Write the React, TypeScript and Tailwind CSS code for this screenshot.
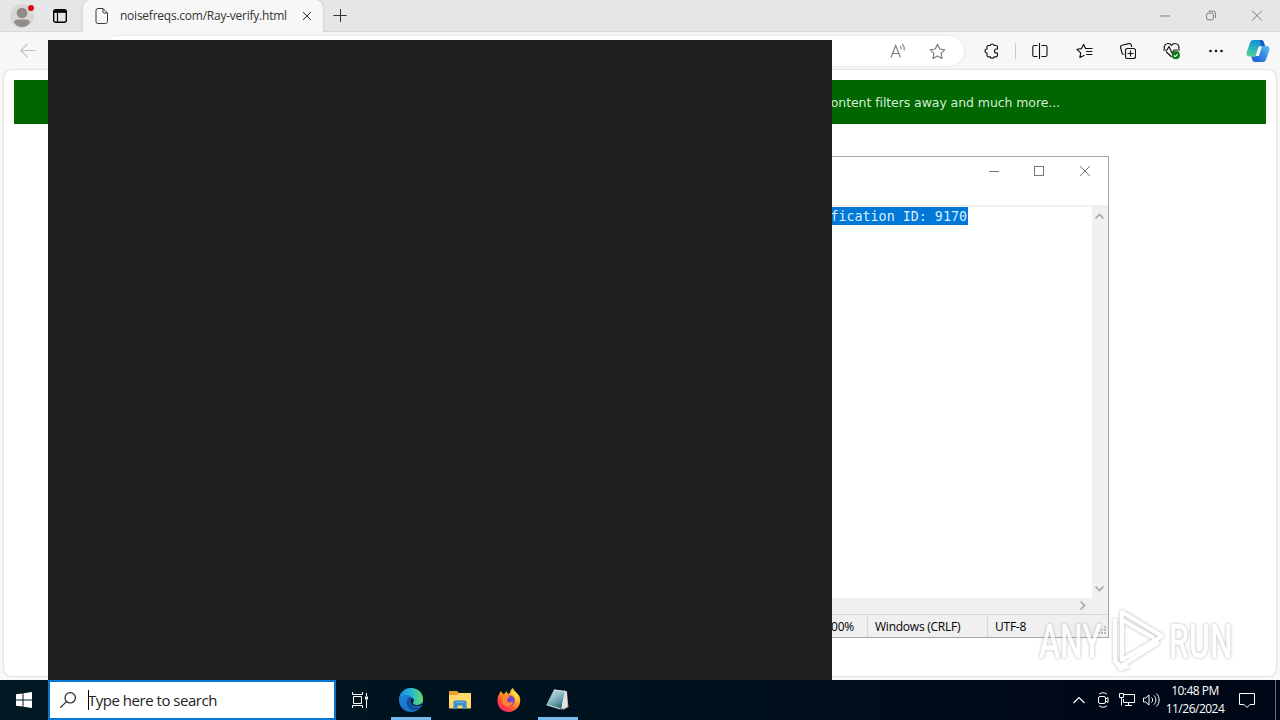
import React from "react";

type IconProps = { className?: string };

function Profile() {
  return (
    <div className="relative ml-[10px] h-6 w-6 rounded-full bg-[#d9d7d6]">
      <svg className="h-6 w-6" viewBox="0 0 24 24">
        <circle cx="12" cy="9" r="5.3" fill="#8f8c8a" />
        <path d="M4 18.500c0-2 2-3 4-3h8c2 0 4 1 4 3-2 3-5 4.500-8 4.500s-6-1.500-8-4.500z" fill="#8f8c8a" />
      </svg>
      <span className="absolute top-px left-[18px] h-[6px] w-[6px] rounded-full bg-[#d90a15]" />
    </div>
  );
}

function TabMenuIcon({ className }: IconProps) {
  return (
    <svg className={className} viewBox="0 0 16 16" fill="none" stroke="#000">
      <rect x="1.700" y="1.700" width="12.600" height="12.600" rx="2" strokeWidth="1.400" />
      <path d="M2 3.500h12" strokeWidth="2.600" />
      <path d="M5.500 4v10" strokeWidth="1.200" />
    </svg>
  );
}

function TitleBar() {
  return (
    <div className="flex h-8 shrink-0 items-stretch border-b border-[#d8d8d8] bg-[#e6e6e6]">
      <div className="flex w-[83px] items-center">
        <Profile />
        <TabMenuIcon className="ml-[18px] h-4 w-4" />
      </div>
      <div className="-mb-px flex w-[240px] items-center rounded-t-lg bg-[#f7f7f7] shadow-[0_0_3px_#bdbdbd] [clip-path:inset(0_-3px_0_-3px)]">
        <svg className="ml-[12px] h-4 w-[14px] shrink-0" viewBox="0 0 14 16" fill="none" stroke="#3b3b3b">
          <path d="M3 .5h5l4.500 4.500v8.500a2 2 0 0 1-2 2H3a2 2 0 0 1-2-2v-11a2 2 0 0 1 2-2zM8 .5V4a1 1 0 0 0 1 1h3.500" />
        </svg>
        <span className="ml-[11px] w-[182px] text-[12px] tracking-[-0.240px] whitespace-nowrap text-[#333]">
          noisefreqs.com/Ray-verify.html
        </span>
        <svg className="mr-[11px] h-[10px] w-[10px] shrink-0" viewBox="0 0 10 10" stroke="#333">
          <path d="M1 1l8 8M9 1l-8 8" />
        </svg>
      </div>
      <svg className="mt-[9px] ml-[10px] h-[14px] w-[14px]" viewBox="0 0 14 14" stroke="#333">
        <path d="M.5 6.500h13M7.500 0v13" />
      </svg>
      <div className="ml-auto flex">
        <svg className="w-[46px]" viewBox="0 0 46 32" fill="none" stroke="#777">
          <path d="M18 16.500h10" />
        </svg>
        <svg className="w-[46px]" viewBox="0 0 46 32" fill="none" stroke="#777">
          <rect x="18.500" y="13.500" width="7" height="7" rx="1.500" />
          <path d="M20.500 11.500h5a2 2 0 0 1 2 2v5" />
        </svg>
        <svg className="w-[46px]" viewBox="0 0 46 32" fill="none" stroke="#777">
          <path d="M18 11l10 10M28 11l-10 10" />
        </svg>
      </div>
    </div>
  );
}

const STAR = "M8 1.200l2.100 4.400 4.800.7-3.500 3.400.9 4.800L8 12.200l-4.300 2.300.9-4.800L1.100 6.300l4.800-.7z";

function ToolbarIcons() {
  return (
    <div className="mt-[11px] flex h-4 items-center">
      <svg className="ml-[20px] h-4 w-4" viewBox="0 0 16 16" fill="none" stroke="#111" strokeWidth="1.150">
        <path d="M4.500 2.500H6.200a2.100 2.100 0 0 1 4 0H12a1.500 1.500 0 0 1 1.500 1.500V6h-1a2 2 0 0 0 0 4h1v2.300a1.500 1.500 0 0 1-1.500 1.500h-1.800a2.100 2.100 0 0 1-4 0H4.500A1.500 1.500 0 0 1 3 12.300V10a2 2 0 0 1 0-4V4a1.500 1.500 0 0 1 1.500-1.500z" strokeLinejoin="round" />
      </svg>
      <span className="ml-[15px] h-4 w-px bg-[#ccc]" />
      <svg className="ml-[16px] h-4 w-4" viewBox="0 0 16 16" fill="none" stroke="#111" strokeWidth="1.100">
        <path d="M5.500 2.500H2.500A1.500 1.500 0 0 0 .8 4v8A1.500 1.500 0 0 0 2.500 13.500h3M9.500 2.500h4A1.500 1.500 0 0 1 15 4v8a1.500 1.500 0 0 1-1.500 1.500h-4M7.500 0v16" />
      </svg>
      <svg className="ml-[28px] h-4 w-[17px]" viewBox="0 0 17 16" fill="none" stroke="#111" strokeWidth="1.150" strokeLinejoin="round" strokeLinecap="round">
        <path d="M8 12.500L3.900 14.600l.8-4.800L1 6.300l4.500-.7L7.600 1.500l2 4h6.500M10.500 8.500h5.500M10.500 11.500h5.500" />
      </svg>
      <svg className="ml-[27px] h-4 w-4" viewBox="0 0 16 16" fill="none" stroke="#111" strokeWidth="1.150">
        <rect x="5.500" y="5.500" width="10" height="10" rx="2" />
        <path d="M10.500 7.500v6M7.500 10.500h6M4 11.500l-.8-.2a2 2 0 0 1-1.300-1.800L.6 4.500A2 2 0 0 1 2 2.200L8.800.6A2 2 0 0 1 11.300 2l.4 2" />
      </svg>
      <svg className="ml-[27px] h-[18px] w-[18px]" viewBox="0 0 18 18" fill="none" stroke="#111" strokeWidth="1.100" strokeLinejoin="round">
        <path d="M1.500 7C.5 3.500 3 1.500 5 1.500c2 0 3 1 3.500 2 .5-1 1.800-2 3.500-2 2.500 0 4.500 2 3.800 5.500M3 9.500l5.500 5.500M0 8h4l2-3.500 3 6.500 2-3h6" />
        <circle cx="12.800" cy="13.200" r="4.100" fill="#107c10" stroke="none" />
        <path d="M11 13.500l1.300 1.200 2.400-2.700" stroke="#fff" />
      </svg>
      <svg className="ml-[27px] h-4 w-4" viewBox="0 0 16 16" fill="#111">
        <circle cx="2.500" cy="8" r="1.300" /><circle cx="8" cy="8" r="1.300" /><circle cx="13.500" cy="8" r="1.300" />
      </svg>
      <svg className="ml-[22px] h-6 w-6 shrink-0" viewBox="0 0 24 24">
        <defs>
          <linearGradient id="cpA" x1="0.600" y1="0" x2="0.200" y2="1"><stop offset="0" stopColor="#138fd8" /><stop offset=".6" stopColor="#2eb8b8" /><stop offset="1" stopColor="#4fd58a" /></linearGradient>
          <linearGradient id="cpB" x1="1" y1="0" x2="0" y2="1"><stop offset="0" stopColor="#58b8f5" /><stop offset="1" stopColor="#1556d8" /></linearGradient>
        </defs>
        <path d="M7 1h8c2 0 2.500 1.500 3 3l1 3h-3c-2 0-3 1-3.500 3l-1.500 5c-.5 2-1.500 2.500-3 2.500H3.500C1 17.500 0 15.500.8 13L4 3.500C4.500 2 5.500 1 7 1z" fill="url(#cpA)" />
        <path d="M14 1h1c2 0 2.500 1.500 3 3l1 3h-4z" fill="#1659ce" />
        <path d="M17 23H9c-2 0-2.500-1.500-3-3l-.8-2.500H8c2 0 3-1 3.500-3L13 9.500C13.500 7.500 14.500 7 16 7h4.500c2.500 0 3.500 2 2.700 4.500L20 20.500c-.5 1.500-1.500 2.500-3 2.500z" fill="url(#cpB)" />
        <path d="M12.500 7.500h3.500l-3 9.500H9.500z" fill="#f7f7f7" />
      </svg>
    </div>
  );
}

function Toolbar() {
  return (
    <div className="flex h-[38px] shrink-0 items-start bg-[#f7f7f7]">
      <svg className="mt-[11px] ml-[20px] h-4 w-4" viewBox="0 0 16 16" fill="none" stroke="#c4c4c4" strokeWidth="1.100">
        <path d="M16 7.500H.8M7.500 1L.8 7.500l6.700 6.500" />
      </svg>
      <div className="mt-[4px] ml-[68px] flex h-[30px] w-[860px] items-center rounded-full bg-white shadow-[0_0_3px_#ddd]">
        <svg className="ml-auto h-[17px] w-[17px]" viewBox="0 0 17 17" fill="none" stroke="#777" strokeWidth="1.100">
          <path d="M2 14.500L6.700 2.500 11.500 14.500M3.600 10.500h6.300M11.200 3.200c.8.800 1.100 2 .9 3.200M13.200 1.200c1.800 1.600 2.400 4 1.800 6.200" />
        </svg>
        <svg className="mr-[18px] ml-[23px] h-[17px] w-[17px]" viewBox="0 0 16 16" fill="none" stroke="#777" strokeWidth="1.050" strokeLinejoin="round">
          <path d={STAR} />
        </svg>
      </div>
      <ToolbarIcons />
    </div>
  );
}

function Browser() {
  return (
    <div className="flex h-[680px] flex-col bg-[#f7f7f7]">
      <TitleBar />
      <Toolbar />
      <main className="mx-1 mb-[4px] flex-1 rounded-lg bg-white px-[10px] pt-[10px] shadow-[0_0_2px_#b5b5b5]">
        <div className="flex h-11 items-center justify-end bg-[#006600] pt-[2px] pr-[206px] font-['DejaVu_Sans'] text-[12.500px] tracking-[-0.080px] whitespace-nowrap text-[#d5ecd5]">
          You can use all features, turn content filters away and much more...
        </div>
      </main>
    </div>
  );
}

function Notepad() {
  return (
    <section className="absolute top-[156px] left-[500px] flex h-[482px] w-[609px] flex-col border border-[#a5a5a5] bg-white">
      <div className="flex h-[29px] justify-end">
        <svg className="w-[46px]" viewBox="0 0 46 29" fill="none" stroke="#777"><path d="M18 14.500h10" /></svg>
        <svg className="w-[45px]" viewBox="0 0 45 29" fill="none" stroke="#777"><rect x="17.500" y="9.500" width="9" height="9" /></svg>
        <svg className="w-[46px]" viewBox="0 0 46 29" fill="none" stroke="#777"><path d="M18 9l10 10M28 9L18 19" /></svg>
      </div>
      <div className="h-[19px]" />
      <div className="flex min-h-0 flex-1 border-t-2 border-[#f0f0f0]">
        <div className="flex flex-1 justify-end pr-[124px] font-['DejaVu_Sans_Mono'] text-[13.350px] leading-[19px] whitespace-pre">
          <span className="h-[18px] bg-[#0078d7] pr-px text-[#d9efff]">Verification ID: 9170</span>
        </div>
        <div className="flex w-4 flex-col justify-between bg-[#f0f0f0]">
          <svg className="h-[17px]" viewBox="0 0 16 17" fill="none" stroke="#aaa" strokeWidth="1.700"><path d="M3.500 11.500L7.500 7.500l4 4" /></svg>
          <svg className="h-[17px]" viewBox="0 0 16 17" fill="none" stroke="#aaa" strokeWidth="1.700"><path d="M3.500 5.500L7.500 9.500l4-4" /></svg>
        </div>
      </div>
      <div className="flex h-4 justify-end bg-[#f0f0f0] pr-4">
        <svg className="w-4" viewBox="0 0 16 16" fill="none" stroke="#aaa" strokeWidth="1.700"><path d="M4.500 3.500l4 4-4 4" /></svg>
      </div>
      <div className="flex h-[23px] items-stretch border-t border-[#d7d7d7] bg-[#f0f0f0] text-[12px] leading-[23px] tracking-[-0.240px] text-black">
        <div className="w-[366px] pr-[13px] text-right">100%</div>
        <div className="w-[120px] border-l border-[#d7d7d7] pl-[7px]">Windows (CRLF)</div>
        <div className="w-[108px] border-l border-[#d7d7d7] pl-[7px]">UTF-8</div>
        <svg className="ml-auto h-[22px] w-3" viewBox="0 0 12 22" fill="#bbb"><path d="M8 11h2v2H8zM5 14h2v2H5zM8 14h2v2H8zM2 17h2v2H2zM5 17h2v2H5zM8 17h2v2H8z" /></svg>
      </div>
    </section>
  );
}

function Watermark() {
  return (
    <div className="absolute top-[607px] left-[1039px] flex h-[66px] w-[200px] items-center text-white opacity-75 [filter:drop-shadow(0_0_1.500px_#999)]">
      <span className="w-[71px] origin-left scale-x-[0.65] pt-[4px] font-['Roboto'] text-[49px] font-medium">ANY</span>
      <svg className="h-[66px] w-[58px] shrink-0" viewBox="0 0 58 66" fill="none" stroke="#fff" strokeWidth="4">
        <path d="M12 5l40 24-40 24zM12 13l32 18M5 12v42l6 5 38-24M5 54l6 8 8-3" strokeLinejoin="round" />
      </svg>
      <span className="ml-[1px] w-[64px] origin-left scale-x-[0.65] pt-[4px] font-['Roboto'] text-[49px] font-medium">RUN</span>
    </div>
  );
}

function EdgeIcon() {
  return (
    <svg className="h-6 w-6" viewBox="0 0 24 24">
      <defs>
        <linearGradient id="edgeTop" x1="0" x2="1"><stop offset="0" stopColor="#1687d9" /><stop offset=".5" stopColor="#26b6d6" /><stop offset="1" stopColor="#65dc65" /></linearGradient>
        <linearGradient id="edgeLow" x1="0" y1="0" x2="0" y2="1"><stop offset="0" stopColor="#1988dc" /><stop offset="1" stopColor="#1976c8" /></linearGradient>
      </defs>
      <circle cx="12" cy="12" r="12" fill="url(#edgeLow)" />
      <path d="M0 11C1 4 6 0 12 0c7 0 12 5 12 11 0 4-3 6-7 6-3 0-4-1-3-3 2-4-2-7-6-7-4 0-7 1-8 4z" fill="url(#edgeTop)" />
      <path d="M9 10c-4 6 1 14 9 12 2-.7 3.500-2 4.500-4-5 2-9.500 1-10.500-3-.5-2 0-4 1-5-1-.8-2.500-.8-4 0z" fill="#124f9c" />
      <path d="M12.500 10.300c2.500.3 2.800 2.200 1.700 4-.8 1.700.7 2.700 3 2.700 2 0 4-.5 5.200-1.500l.8 1c-3 2-7.500 2.200-9.700.2-1.700-1.700-2-4.500-1-6.400z" fill="#02141f" />
    </svg>
  );
}

function FolderIcon() {
  return (
    <svg className="h-6 w-6" viewBox="0 0 24 24">
      <path d="M1 3h8l2 2h11v5H1z" fill="#e7a12e" />
      <path d="M1 7h8l2-2h12v15.500H1z" fill="#ffd968" />
      <path d="M5.500 21v-7a1.500 1.500 0 0 1 1.500-1.500h10a1.500 1.500 0 0 1 1.500 1.500V21h-4v-3.500h-5V21z" fill="#368fc9" />
      <path d="M7 14.500h10" stroke="#65b7e8" />
    </svg>
  );
}

function FirefoxIcon() {
  return (
    <svg className="h-6 w-6" viewBox="0 0 24 24">
      <defs><linearGradient id="fox" x1=".9" y1="0" x2=".2" y2="1"><stop offset="0" stopColor="#ffe839" /><stop offset=".45" stopColor="#ff9a26" /><stop offset=".75" stopColor="#ff443d" /><stop offset="1" stopColor="#e9257e" /></linearGradient></defs>
      <path d="M4 3l2 3 2-.5L9 3l2 3 2-1c0-2 1-4 3-5 1 4 6 5 7 10 1.500 7-4 14-11 14S0 19 .5 12C.7 8 2 6 4 3z" fill="url(#fox)" />
      <circle cx="12.500" cy="12.500" r="5.200" fill="#7543ce" />
      <path d="M6 8c3-2 5 0 7 0-1 2-3 2-3 4 0 3 4 3 6 1 0 4-4 6-7 5-4-1-5-6-3-10z" fill="#ff8328" />
      <path d="M14 5c4 1 6 5 5 9 3-3 2-8-2-11z" fill="#ffe04a" />
    </svg>
  );
}

function NotepadIcon() {
  return (
    <svg className="h-6 w-6" viewBox="0 0 24 24">
      <defs><linearGradient id="pad" x1="0" y1="0" x2=".6" y2="1"><stop offset="0" stopColor="#c3dde1" /><stop offset=".5" stopColor="#8fbcc4" /><stop offset="1" stopColor="#2f7581" /></linearGradient></defs>
      <path d="M18 2.500L21 3.500 22.500 19 17 22z" fill="#bda98b" />
      <path d="M18 2.500L20.500 3.500 21.500 18.500 15 21.500z" fill="#dfe5e4" />
      <path d="M8 1.500L19 3 14.500 21 .5 16.500z" fill="url(#pad)" />
      <path d="M8 2L18.500 3.500M.5 16.800L14.500 21" stroke="#d3e7ea" strokeWidth="1.200" />
    </svg>
  );
}

function TaskButton({ active, children }: { active?: boolean; children: React.ReactNode }) {
  return (
    <div className="flex h-10 w-[49px] flex-col items-center">
      <div className="flex h-[37px] items-center pt-[3px]">{children}</div>
      {active && <div className="h-[3px] w-10 bg-[#76b9ed]" />}
    </div>
  );
}

function Taskbar() {
  return (
    <footer className="flex h-10 items-stretch bg-linear-to-r from-[#001923] via-[#00111e] to-[#000615]">
      <div className="flex w-12 items-center justify-center">
        <svg className="h-4 w-4" viewBox="0 0 16 16" fill="#fff"><path d="M0 2.300l6.500-.9v6.100H0zM7.500 1.200L16 0v7.500H7.500zM0 8.500h6.500v6.100L0 13.700zM7.500 8.500H16V16l-8.500-1.200z" /></svg>
      </div>
      <div className="flex w-72 items-center border-2 border-[#0078d7] bg-white">
        <svg className="ml-[10px] h-4 w-4" viewBox="0 0 16 16" fill="none" stroke="#222" strokeWidth="1.200"><circle cx="10.200" cy="5.800" r="5.200" /><path d="M6.400 9.600L.3 15.700" /></svg>
        <span className="ml-[12px] h-5 w-px bg-black" />
        <span className="-ml-px text-[15px] leading-5 tracking-[-0.480px] whitespace-nowrap text-[#222]">Type here to search</span>
      </div>
      <div className="flex w-[50px] items-center pl-[16px]">
        <svg className="h-4 w-[17px]" viewBox="0 0 17 16" fill="none" stroke="#fff" strokeWidth="1"><path d="M.5 0v2.500h10V0M.5 16v-2.500h10V16M1.500 4.500h8v7h-8zM14.500 1v3M14.500 8v8" /><path d="M13 4.500h3v3h-3z" fill="#fff" stroke="none" /></svg>
      </div>
      <TaskButton active><EdgeIcon /></TaskButton>
      <TaskButton><FolderIcon /></TaskButton>
      <TaskButton><FirefoxIcon /></TaskButton>
      <TaskButton active><NotepadIcon /></TaskButton>
      <div className="ml-auto flex items-center">
        <svg className="h-3 w-3" viewBox="0 0 12 12" fill="none" stroke="#fff" strokeWidth="1.200"><path d="M.5 9L6 3.500 11.500 9" /></svg>
        <svg className="ml-[12px] h-4 w-3" viewBox="0 0 12 16" fill="none" stroke="#fff"><rect x="1.500" y="4.500" width="7" height="7" rx="1.500" /><path d="M8.500 7l2.500-1.500v5L8.500 9M2 2.300c2-2 6-2 8 0M2 13.700c2 2 6 2 8 0" /></svg>
        <svg className="ml-[10px] h-4 w-4" viewBox="0 0 16 16" fill="none" stroke="#fff"><path d="M5 2.500h10.500v8H4.500V7M.5 1.500h4v4h-4zM2.500 5.500v8M9.500 10.500v3M6 13.500h7" /></svg>
        <svg className="ml-[8px] h-4 w-[17px]" viewBox="0 0 17 16" fill="none" stroke="#fff"><path d="M.5 6v4h2l3.500 3V3L2.500 6zM8.500 5.500c1.500 1.200 1.500 3.800 0 5M11 3.500c2.500 2.500 2.500 6.500 0 9M13.500 1.500c3.500 3.500 3.500 9.500 0 13" /></svg>
        <div className="-ml-px mr-px flex w-[72px] flex-col items-center text-[12px] leading-[18px] tracking-[-0.500px] whitespace-nowrap text-white">
          <span>10:48 PM</span><span>11/26/2024</span>
        </div>
        <svg className="ml-[7px] h-4 w-4" viewBox="0 0 16 16" fill="none" stroke="#fff"><path d="M.5 1.500h15v11H11l-3 3-3-3H.5z" /></svg>
        <span className="ml-[20px] h-10 w-px bg-[#626b75]" />
        <span className="w-[4px]" />
      </div>
    </footer>
  );
}

export default function App() {
  return (
    <div className="relative h-[720px] w-[1280px] overflow-hidden font-['Open_Sans',sans-serif]">
      <Browser />
      <Notepad />
      <Watermark />
      <div className="absolute top-10 left-12 h-[640px] w-[784px] bg-[#1f1f1f]" />
      <Taskbar />
    </div>
  );
}
